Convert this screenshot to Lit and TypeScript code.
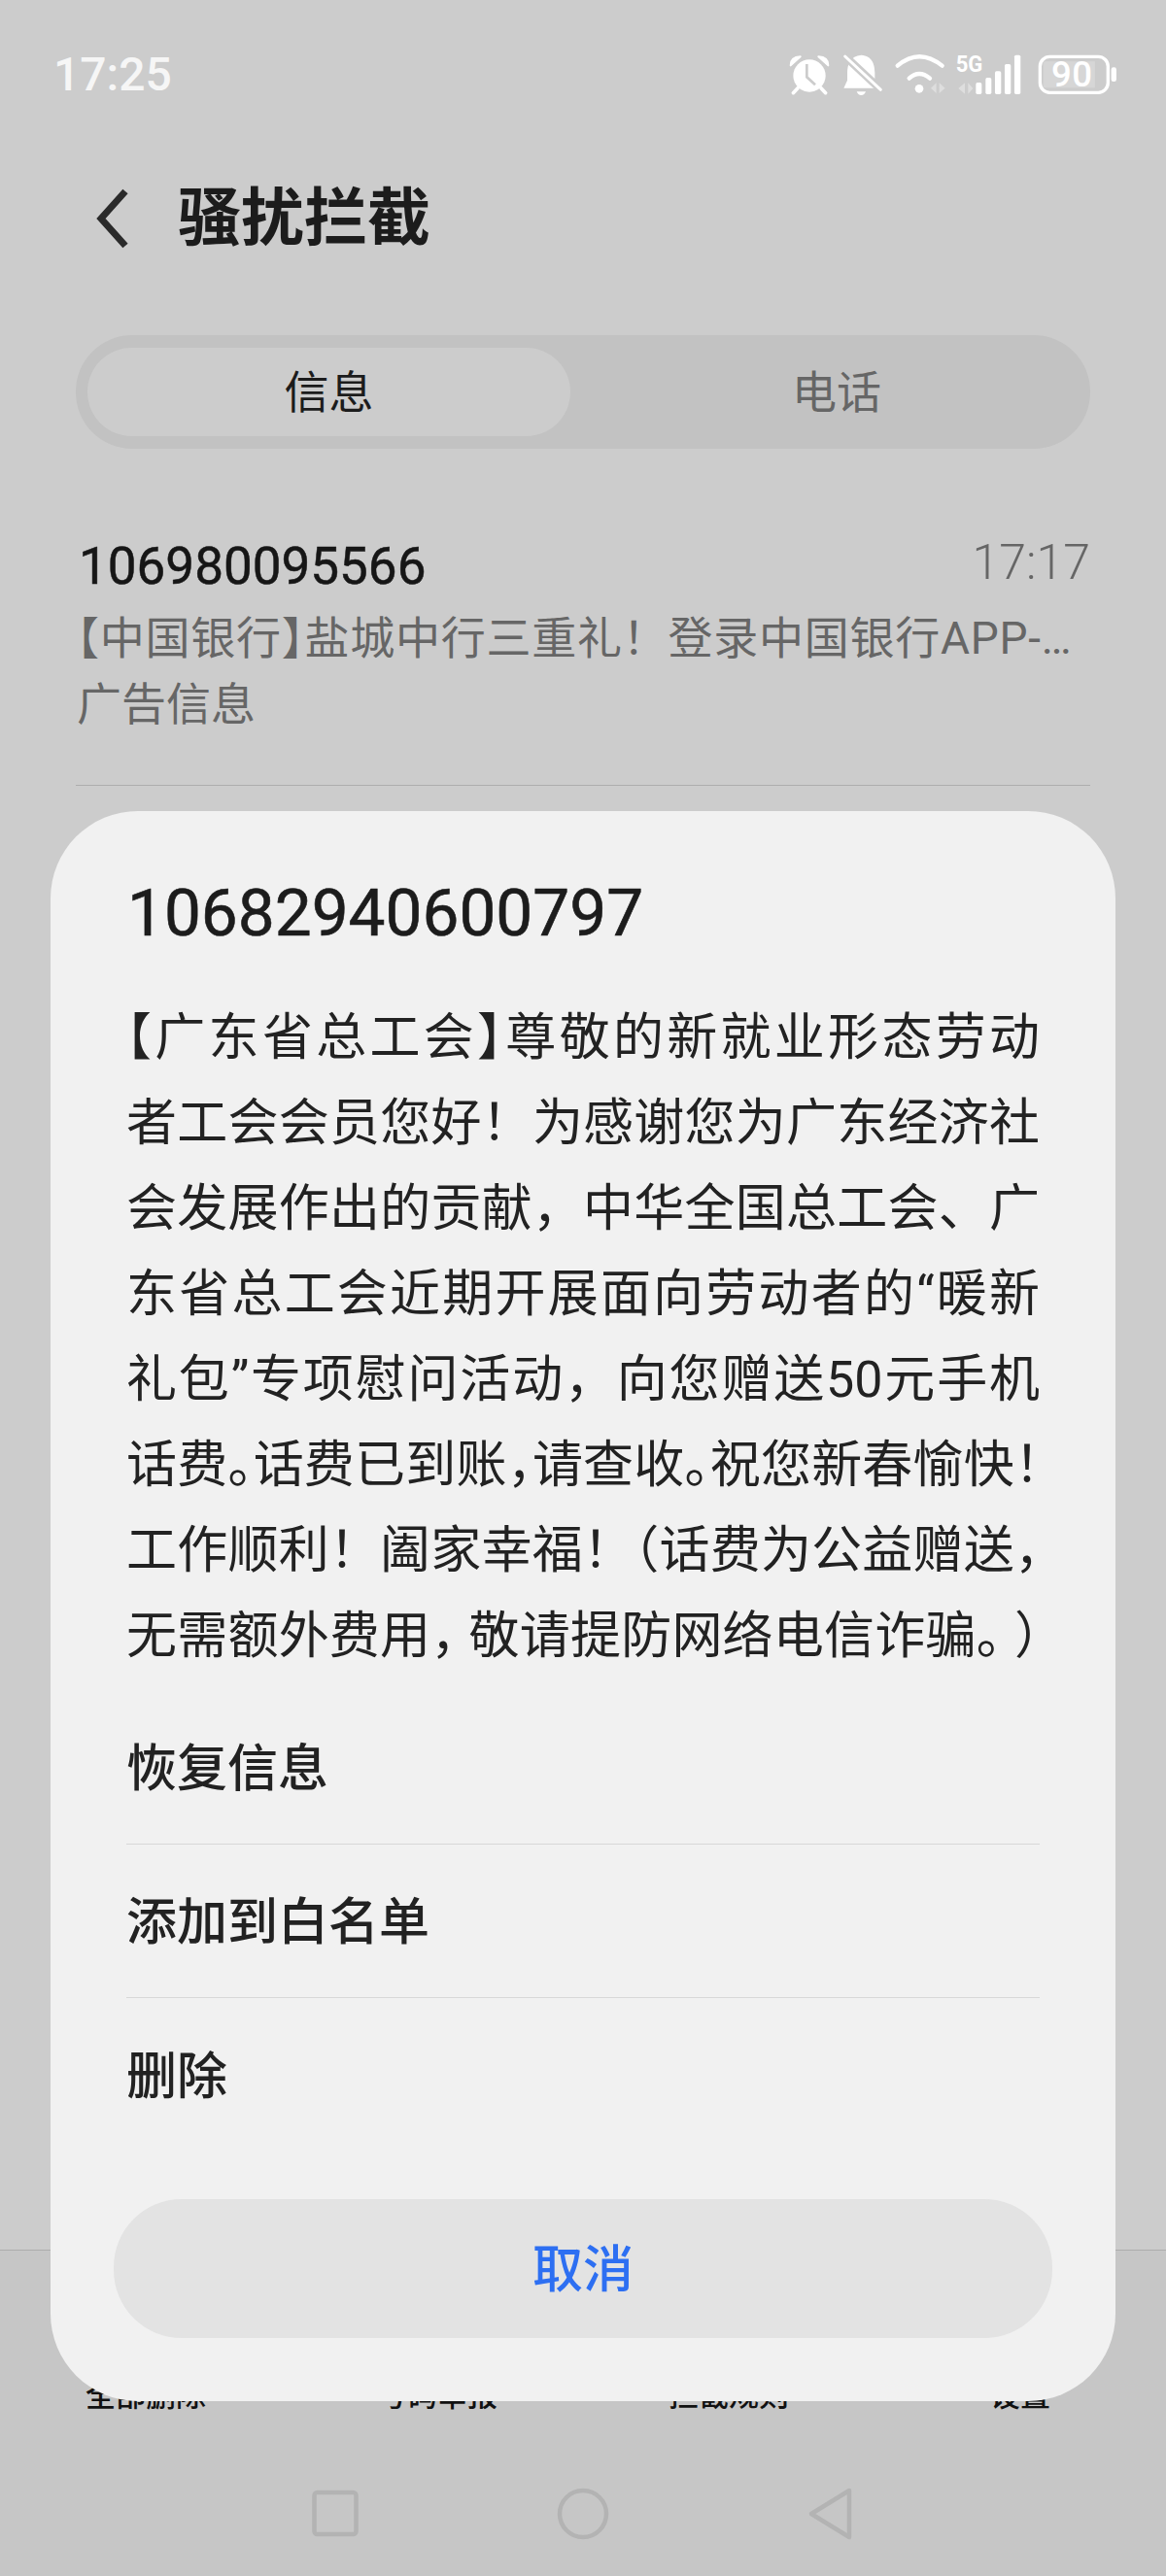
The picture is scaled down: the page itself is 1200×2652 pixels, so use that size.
import { LitElement, html, css, svg } from "lit";
import { customElement } from "lit/decorators.js";

const h = (s: string) => html`<span class="halt">${s}</span>`;

const ICON_FG = "#ffffff";
const BG = "#cccccc";

const alarm = svg`
  <circle cx="158" cy="144" r="50" fill="${ICON_FG}"/>
  <path d="M100 112 Q100 86 130 85 Z" fill="${ICON_FG}" stroke="${ICON_FG}" stroke-width="6" stroke-linejoin="round"/>
  <path d="M216 112 Q216 86 186 85 Z" fill="${ICON_FG}" stroke="${ICON_FG}" stroke-width="6" stroke-linejoin="round"/>
  <path d="M122 182 L108 197 M194 182 L208 197" stroke="${ICON_FG}" stroke-width="11" stroke-linecap="round"/>
  <path d="M150 108 V148 L176 172" fill="none" stroke="${BG}" stroke-width="8"/>`;

const bell = svg`
  <path d="M318 80 C284 82 275 110 275 135 V158 L264 182 H372 L360 158 V135 C360 110 352 82 318 80 Z" fill="${ICON_FG}"/>
  <path d="M304 193 H332 Q328 204 318 204 Q308 204 304 193 Z" fill="${ICON_FG}"/>
  <path d="M262 78 L384 192" stroke="${BG}" stroke-width="24"/>
  <path d="M268 84 L378 187" stroke="${ICON_FG}" stroke-width="9" stroke-linecap="round"/>`;

const wifi = svg`
  <path d="M431 113 Q498 56 569 113" fill="none" stroke="${ICON_FG}" stroke-width="13" stroke-linecap="round"/>
  <path d="M467 152 Q498 124 531 152" fill="none" stroke="${ICON_FG}" stroke-width="13" stroke-linecap="round"/>
  <circle cx="498" cy="184" r="13" fill="${ICON_FG}"/>
  <path d="M551 166 V198 L534 182 Z M560 166 V198 L578 182 Z" fill="#dedede"/>`;

const signal = svg`
  <text class="g5" x="612" y="131" textLength="83" lengthAdjust="spacingAndGlyphs">5G</text>
  <path d="M640 166 V200 L620 183 Z M650 166 V200 L665 183 Z" fill="#dedede"/>
  <rect x="674" y="165" width="18" height="36" rx="5" fill="${ICON_FG}"/>
  <rect x="704" y="150" width="18" height="51" rx="5" fill="${ICON_FG}"/>
  <rect x="733" y="130" width="19" height="71" rx="5" fill="${ICON_FG}"/>
  <rect x="763" y="108" width="19" height="93" rx="5" fill="${ICON_FG}"/>
  <rect x="793" y="80" width="19" height="121" rx="5" fill="${ICON_FG}"/>`;

const battery = svg`
  <rect x="870" y="85" width="210" height="111" rx="30" fill="none" stroke="${ICON_FG}" stroke-width="10"/>
  <path d="M885 100 H1040 V181 H885 Q880 181 880 176 V105 Q880 100 885 100 Z" fill="#d6d6d6"/>
  <text class="pct" x="968" y="178" text-anchor="middle" textLength="126">90</text>
  <rect x="1090" y="118" width="16" height="44" rx="7" fill="${ICON_FG}"/>`;

@customElement("app-root")
export class AppRoot extends LitElement {
  static styles = css`
    :host {
      display: block;
      width: 1200px;
      height: 2652px;
      position: relative;
      overflow: hidden;
      background: #cccccc;
      font-family: Roboto, "Noto Sans CJK SC", sans-serif;
      color: #1c1c1c;
    }
    .page { display: flex; flex-direction: column; height: 100%; }
    .halt { font-feature-settings: "halt" 1; }
    .comma { font-feature-settings: "halt" 1; margin-right: 13px; }
    .stop { letter-spacing: -13px; }

    .status {
      height: 152px;
      box-sizing: border-box;
      flex: none;
      display: flex;
      align-items: center;
      justify-content: space-between;
      padding: 2px 50px 0 55px;
    }
    .time { font-size: 48px; font-weight: 500; color: #f6f6f6; line-height: 60px; }
    .icons { display: flex; align-items: center; }
    .icons svg { display: block; height: 43.3px; overflow: visible; }
    .ic-alarm { width: 41.7px; margin-right: 13px; }
    .ic-bell { width: 41.7px; margin-right: 11.7px; }
    .ic-wifi { width: 55px; margin-right: 8.3px; }
    .ic-signal { width: 68.3px; margin-right: 15px; }
    .ic-battery { width: 83.3px; }
    .g5 { font: 700 70px Roboto, sans-serif; fill: #ffffff; }
    .pct { font: 500 110px Roboto, sans-serif; fill: #ffffff; }

    .bar {
      height: 140px;
      box-sizing: border-box;
      flex: none;
      display: flex;
      align-items: center;
      padding: 6px 0 0 97px;
      gap: 50px;
    }
    .bar svg { display: block; width: 36px; height: 66px; }
    .bar h1 {
      margin: 0;
      font-size: 65px;
      font-weight: 700;
      line-height: 80px;
      color: #1c1c1c;
    }

    .tabs {
      flex: none;
      margin: 53px 78px 0;
      height: 117px;
      box-sizing: border-box;
      padding: 13px 0 13px 12px;
      border-radius: 58px;
      background: #c2c2c2;
      display: grid;
      grid-template-columns: 497px 1fr;
      column-gap: 13px;
      align-items: center;
      text-align: center;
      font-size: 46px;
    }
    .tab { color: #666666; height: 91px; line-height: 93px; }
    .tab.on { color: #1c1c1c; background: #cccccc; border-radius: 46px; }

    .item {
      flex: none;
      margin: 0 78px;
      padding: 91px 0 45px;
      border-bottom: 1px solid #adadad;
    }
    .item-top { display: flex; justify-content: space-between; align-items: flex-start; padding-left: 3px; }
    .num { font-size: 53px; font-weight: 400; -webkit-text-stroke: 0.5px #161616; line-height: 60px; color: #161616; }
    .when { font-size: 50px; line-height: 52px; font-weight: 300; color: #666666; }
    .preview { font-size: 46px; line-height: 76px; color: #666666; padding-left: 1px; white-space: nowrap; }
    .preview.first { margin-top: 6px; letter-spacing: 0.75px; }
    .preview.second { margin-top: -8px; }

    .spacer { flex: 1; }
    .foot {
      flex: none;
      height: 336px;
      box-sizing: border-box;
      border-top: 1px solid #adadad;
      background: #c6c6c6;
      display: flex;
      flex-direction: column;
    }
    .foot-tabs {
      display: grid;
      grid-template-columns: repeat(4, 300px);
      margin-top: 130px;
      text-align: center;
      font-size: 31px;
      line-height: 40px;
      font-weight: 500;
      color: #111111;
    }
    .nav {
      margin-top: 71px;
      display: grid;
      grid-template-columns: repeat(3, 255px);
      justify-content: center;
      justify-items: center;
    }
    .nav svg { display: block; width: 60px; height: 60px; }

    .sheet {
      position: absolute;
      left: 52px;
      top: 835px;
      width: 1096px;
      height: 1637px;
      box-sizing: border-box;
      padding: 62px 78px 0 78px;
      border-radius: 90px;
      background: #f1f1f1;
    }
    .sheet-num { font-size: 67.5px; font-weight: 400; -webkit-text-stroke: 0.6px #1c1c1c; line-height: 86px; color: #1c1c1c; margin-left: 1px; }
    .msg {
      margin-top: 42px;
      font-size: 52px;
      line-height: 88px;
      color: #222222;
      text-spacing-trim: space-all;
    }
    .msg div {
      white-space: nowrap;
      text-align: justify;
      text-align-last: justify;
      text-justify: inter-character;
    }
    .actions { margin-top: 12px; }
    .action {
      height: 158px;
      box-sizing: border-box;
      display: flex;
      align-items: center;
      font-size: 52px;
      font-weight: 500;
      color: #222222;
      padding-bottom: 6px;
      border-bottom: 1px solid #d8d8d8;
    }
    .action:last-child { border-bottom: none; }
    .cancel {
      margin: 49px -13px 0 -13px;
      height: 143px;
      box-sizing: border-box;
      padding-bottom: 6px;
      border-radius: 70px;
      background: #e3e3e3;
      display: flex;
      align-items: center;
      justify-content: center;
      font-size: 52px;
      font-weight: 500;
      color: #2d6ff2;
    }
  `;

  render() {
    return html`
      <div class="page">
        <div class="status">
          <span class="time">17:25</span>
          <div class="icons">
            <svg class="ic-alarm" viewBox="95 75 125 130">${alarm}</svg>
            <svg class="ic-bell" viewBox="260 75 125 130">${bell}</svg>
            <svg class="ic-wifi" viewBox="420 75 165 130">${wifi}</svg>
            <svg class="ic-signal" viewBox="610 75 205 130">${signal}</svg>
            <svg class="ic-battery" viewBox="860 75 250 130">${battery}</svg>
          </div>
        </div>

        <div class="bar">
          <svg viewBox="0 0 36 66"><path d="M32 5 L7 33 L32 61" fill="none" stroke="#2a2a2a" stroke-width="7"/></svg>
          <h1>骚扰拦截</h1>
        </div>

        <div class="tabs">
          <div class="tab on">信息</div>
          <div class="tab">电话</div>
        </div>

        <div class="item">
          <div class="item-top">
            <span class="num">106980095566</span>
            <span class="when">17:17</span>
          </div>
          <div class="preview first">${h("【")}中国银行${h("】")}盐城中行三重礼！登录中国银行APP-…</div>
          <div class="preview second">广告信息</div>
        </div>

        <div class="spacer"></div>

        <div class="foot">
          <div class="foot-tabs">
            <span>全部删除</span><span>号码举报</span><span>拦截规则</span><span>设置</span>
          </div>
          <div class="nav">
            <svg viewBox="0 0 60 60"><rect x="8.5" y="8" width="43" height="43" rx="3" fill="none" stroke="#b3b3b3" stroke-width="4.5"/></svg>
            <svg viewBox="0 0 60 60"><circle cx="30" cy="30" r="24" fill="none" stroke="#b3b3b3" stroke-width="4.5"/></svg>
            <svg viewBox="0 0 60 60"><path d="M49 6 L10 30 L49 54 Z" fill="none" stroke="#b3b3b3" stroke-width="4.5" stroke-linejoin="round"/></svg>
          </div>
        </div>
      </div>

      <div class="sheet">
        <div class="sheet-num">10682940600797</div>
        <div class="msg">
          <div>${h("【")}广东省总工会${h("】")}尊敬的新就业形态劳动</div>
          <div>者工会会员您好！为感谢您为广东经济社</div>
          <div>会发展作出的贡献，中华全国总工会、广</div>
          <div>东省总工会近期开展面向劳动者的“暖新</div>
          <div>礼包”专项慰问活动，向您赠送50元手机</div>
          <div>话费${h("。")}话费已到账${h("，")}请查收${h("。")}祝您新春愉快${h("！")}</div>
          <div>工作顺利！阖家幸福！${h("（")}话费为公益赠送${h("，")}</div>
          <div>无需额外费用<span class="comma">，</span>敬请提防网络电信诈骗<span class="stop">。</span>${h("）")}</div>
        </div>
        <div class="actions">
          <div class="action">恢复信息</div>
          <div class="action">添加到白名单</div>
          <div class="action">删除</div>
        </div>
        <div class="cancel">取消</div>
      </div>
    `;
  }
}
